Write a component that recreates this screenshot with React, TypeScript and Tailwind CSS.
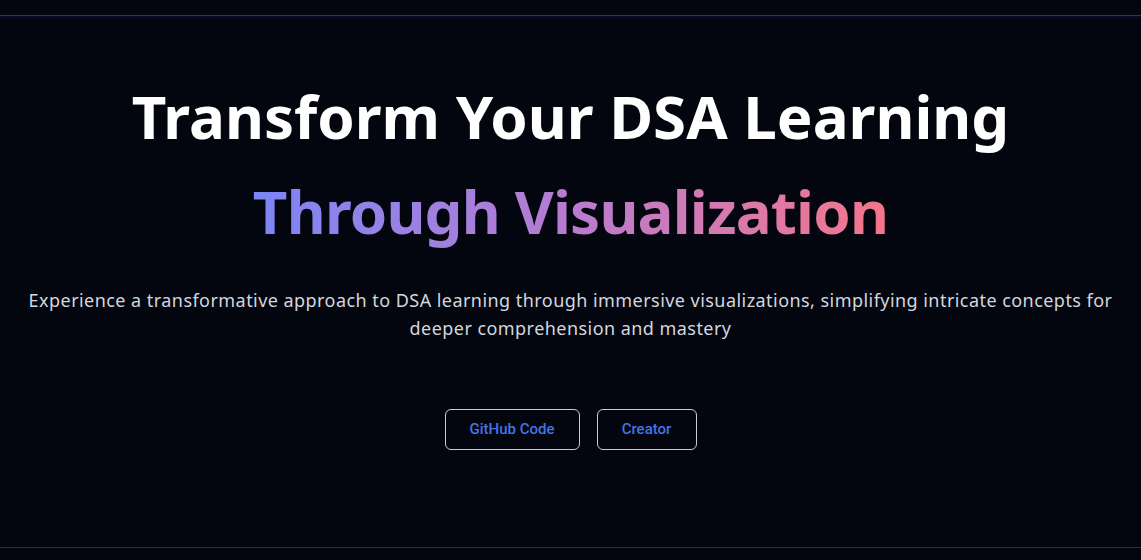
export default function App() {
  return (
    <div className="min-h-[560px] bg-[#03060f] flex flex-col" style={{ fontFamily: '"Noto Sans", "Open Sans", sans-serif' }}>
      <div className="h-[15px]" />
      <div className="h-px bg-[#2f3360] shadow-[0_1px_3px_#1a1f5a]" />
      <main className="flex-1 flex flex-col items-center pt-[60px]">
        <h1 className="text-[60px] leading-[80px] font-bold text-white">Transform Your DSA Learning</h1>
        <h2 className="mt-[15px] text-[60px] leading-[80px] font-bold bg-gradient-to-r from-[#7a85f5] via-[#b87bcf] to-[#f57489] bg-clip-text text-transparent tracking-[-0.8px]">
          Through Visualization
        </h2>
        <p className="mt-[35px] max-w-[1100px] text-center text-[18px] leading-[28px] text-[#d4d7de] tracking-[0.45px]">
          Experience a transformative approach to DSA learning through immersive visualizations, simplifying intricate concepts for deeper comprehension and mastery
        </p>
        <div className="mt-[67px] flex gap-[17px]" style={{ fontFamily: 'Roboto, sans-serif' }}>
          <button className="w-[135px] h-[41px] rounded-md border border-[#c9ccd4] text-[#4474e6] text-[15px] font-medium">GitHub Code</button>
          <button className="w-[100px] h-[41px] rounded-md border border-[#c9ccd4] text-[#4474e6] text-[15px] font-medium">Creator</button>
        </div>
      </main>
      <div className="h-px bg-[#2a2d45]" />
      <div className="h-[12px]" />
    </div>
  );
}
